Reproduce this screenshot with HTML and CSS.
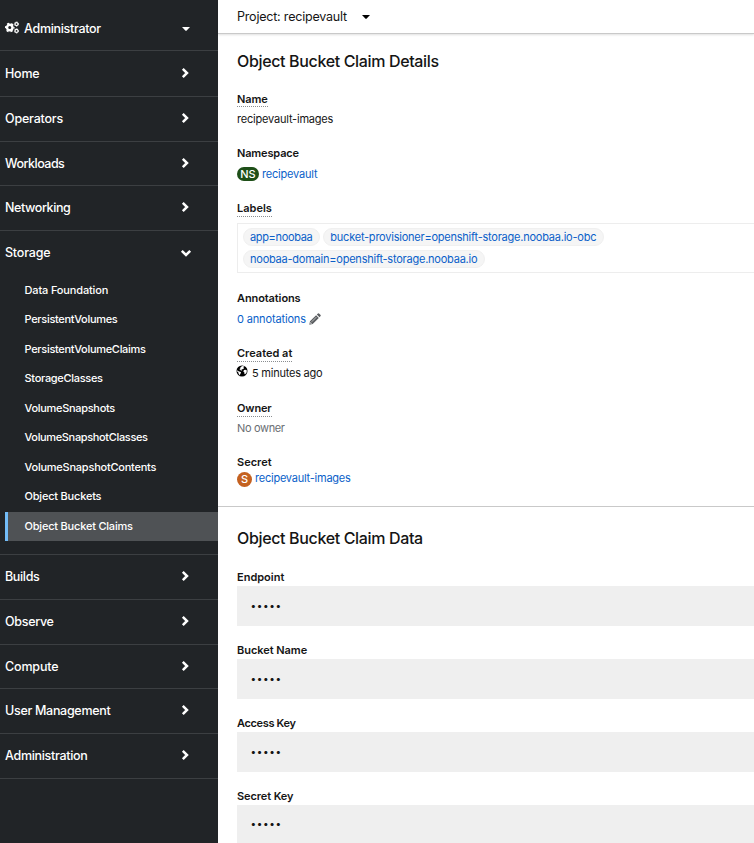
FILE: index.html
```html
<!DOCTYPE html>
<html lang="en">
<head>
<meta charset="utf-8">
<title>Object Bucket Claim Details</title>
<link rel="stylesheet" href="styles.css">
</head>
<body>
<svg width="0" height="0" class="defs">
  <symbol id="right" viewBox="0 0 8 12"><path d="M1.8 1.8 6 6 1.8 10.2" fill="none" stroke="currentColor" stroke-width="2.5"/></symbol>
  <symbol id="down" viewBox="0 0 12 8"><path d="M1.8 1.8 6 6 10.2 1.8" fill="none" stroke="currentColor" stroke-width="2.5"/></symbol>
  <symbol id="caret" viewBox="0 0 8 4"><path d="M0 0h8L4.5 3.8h-1z" fill="currentColor"/></symbol>
</svg>
<div class="page">
  <nav class="sidebar">
    <div class="perspective">
      <svg class="cogs" viewBox="0 0 13 12">
        <circle cx="4.4" cy="6" r="2.5" fill="none" stroke="currentColor" stroke-width="2.2"/>
        <circle cx="4.4" cy="6" r="3.8" fill="none" stroke="currentColor" stroke-width="1.4" stroke-dasharray="2 1.98" stroke-dashoffset="1"/>
        <circle cx="10.7" cy="2.8" r="1.4" fill="none" stroke="currentColor" stroke-width="1.1"/>
        <circle cx="10.7" cy="2.8" r="2" fill="none" stroke="currentColor" stroke-width=".8" stroke-dasharray="1.05 1.05"/>
        <circle cx="10.7" cy="9.2" r="1.4" fill="none" stroke="currentColor" stroke-width="1.1"/>
        <circle cx="10.7" cy="9.2" r="2" fill="none" stroke="currentColor" stroke-width=".8" stroke-dasharray="1.05 1.05"/>
      </svg>
      <span class="k3">Administrator</span>
      <svg class="caret"><use href="#caret"/></svg>
    </div>
    <div class="item first"><span class="k2">Home</span><svg class="right"><use href="#right"/></svg></div>
    <div class="item"><span class="k2">Operators</span><svg class="right"><use href="#right"/></svg></div>
    <div class="item"><span class="k5">Workloads</span><svg class="right"><use href="#right"/></svg></div>
    <div class="item"><span class="k4">Networking</span><svg class="right"><use href="#right"/></svg></div>
    <div class="group">
      <div class="group-title"><span class="k2">Storage</span><svg class="down"><use href="#down"/></svg></div>
      <div class="sub k15">Data Foundation</div>
      <div class="sub k3">PersistentVolumes</div>
      <div class="sub k3">PersistentVolumeClaims</div>
      <div class="sub k3">StorageClasses</div>
      <div class="sub k3">VolumeSnapshots</div>
      <div class="sub k35">VolumeSnapshotClasses</div>
      <div class="sub k25">VolumeSnapshotContents</div>
      <div class="sub k2">Object Buckets</div>
      <div class="sub k2 current">Object Bucket Claims</div>
    </div>
    <div class="item"><span class="k35">Builds</span><svg class="right"><use href="#right"/></svg></div>
    <div class="item"><span class="k3">Observe</span><svg class="right"><use href="#right"/></svg></div>
    <div class="item"><span class="k15">Compute</span><svg class="right"><use href="#right"/></svg></div>
    <div class="item"><span class="k3">User Management</span><svg class="right"><use href="#right"/></svg></div>
    <div class="item"><span class="k3">Administration</span><svg class="right"><use href="#right"/></svg></div>
  </nav>
  <main class="main">
    <header class="project"><span class="k2">Project: recipevault</span><svg class="caret"><use href="#caret"/></svg></header>
    <section class="details">
      <h2>Object Bucket Claim Details</h2>
      <dl>
        <div class="field name"><dt><span class="hint k1">Name</span></dt><dd class="k2">recipevault-images</dd></div>
        <div class="field namespace"><dt class="k15">Namespace</dt><dd><b class="badge ns">NS</b><a class="k2">recipevault</a></dd></div>
        <div class="field labels"><dt><span class="hint">Labels</span></dt>
          <dd class="tags"><a class="tag k35">app=noobaa</a><a class="tag k25">bucket-provisioner=openshift-storage.noobaa.io-obc</a><a class="tag k25">noobaa-domain=openshift-storage.noobaa.io</a></dd></div>
        <div class="field annotations"><dt class="k1">Annotations</dt><dd><a class="k15">0 annotations</a>
          <svg class="pencil" viewBox="0 0 12 12"><path d="M.3 11.7 1 8.3 7.1 2.2 9.8 4.9 3.7 11zM7.8 1.5 9 .4q.5-.4 1 0l1.6 1.6q.4.5 0 1L10.5 4.2z" fill="#5b5e61"/><path d="M2.7 8.8 7.4 4.1M1.6 9.2v1.2h1.2" fill="none" stroke="#fff" stroke-width=".6"/></svg></dd></div>
        <div class="field created"><dt><span class="hint">Created at</span></dt><dd>
          <svg class="globe" viewBox="0 0 12 12"><circle cx="6" cy="6" r="5.5"/><path d="M6.3.9 8.3 1.4 7.4 2.5 8.2 3.2 6.6 4.2 5.4 4.6 6.2 5.6 4.9 5.5 4.3 4.7 3.4 4.2 4.6 2.9 4.3 2.2z" fill="#fff"/><path d="M1.1 5.2 2.6 6.2 4.6 6.9 5.1 7.8 4.2 9 3.9 10.4 2.6 8.8 2.4 7.6 1.2 6.6zM8 5.1 9.6 4.7 10.9 5.6 10.6 7.4 9.2 9.3 8.4 8.9 8.4 7.4 7.3 6.5z" fill="#fff"/></svg><span class="k25">5 minutes ago</span></dd></div>
        <div class="field owner"><dt><span class="hint k15">Owner</span></dt><dd class="muted k35">No owner</dd></div>
        <div class="field secret"><dt>Secret</dt><dd><b class="badge s">S</b><a class="k25">recipevault-images</a></dd></div>
      </dl>
    </section>
    <section class="data">
      <h2>Object Bucket Claim Data</h2>
      <dl>
        <div class="secret-field"><dt>Endpoint</dt><dd>•••••</dd></div>
        <div class="secret-field"><dt class="k05">Bucket Name</dt><dd>•••••</dd></div>
        <div class="secret-field"><dt class="k35">Access Key</dt><dd>•••••</dd></div>
        <div class="secret-field"><dt class="k1">Secret Key</dt><dd class="last">•••••</dd></div>
      </dl>
    </section>
  </main>
</div>
</body>
</html>
```

FILE: styles.css
```css
* { box-sizing: border-box; }
body { margin: 0; font: 11px/16px Inter, "Liberation Sans", sans-serif; color: #151515; background: #fff; }
.defs { display: block; }
svg { flex: none; }
h2, dl, dd, dt { margin: 0; }
.page { display: flex; height: 843px; overflow: hidden; }

/* letter tracking steps */
.k05 { letter-spacing: -.05px; }
.k1 { letter-spacing: -.1px; }
.k15 { letter-spacing: -.15px; }
.k2 { letter-spacing: -.2px; }
.k25 { letter-spacing: -.23px; }
.k3 { letter-spacing: -.3px; }
.k35 { letter-spacing: -.35px; }
.k4 { letter-spacing: -.4px; }
.k5 { letter-spacing: -.5px; }

/* sidebar */
.sidebar { flex: none; width: 218px; background: #212427; color: #fff; font-weight: 500; }
.perspective, .item, .group-title { display: flex; align-items: center; padding-left: 5px; font-size: 12.5px; }
.perspective { height: 51px; padding-top: 7px; border-bottom: 1px solid #3c3f42; }
.cogs { width: 14px; height: 13px; margin: -2px 5px 0 0; }
.caret { width: 8px; height: 4px; }
.perspective .caret { margin: 0 28px 0 auto; }
.item { height: 44.75px; border-bottom: 1px solid #3c3f42; }
.item.first { height: 45.9px; padding-top: 1px; }
.right { width: 8px; height: 12px; margin: -2px 29px 0 auto; }
.down { width: 12px; height: 8px; margin: -1px 26.5px 0 auto; }
.group { height: 324.05px; border-bottom: 1px solid #3c3f42; }
.group-title { height: 44.4px; }
.sub { height: 29.55px; margin-left: 5px; padding-left: 19.5px; line-height: 29.2px; }
.current { height: 29.2px; padding-left: 16.5px; border-left: 3px solid #73bcf7; background: #4f5255; }

/* main */
.main { flex: 1; min-width: 0; }
.project { display: flex; align-items: center; height: 34px; padding-left: 19px; border-bottom: 1px solid #c9c9c9; box-shadow: 0 1px 2px rgba(0,0,0,.12); font-size: 12.5px; }
.project .caret { margin-left: 15px; color: #000; }
h2 { font-size: 16px; line-height: 20px; font-weight: 500; letter-spacing: -.35px; }
.details { height: 473px; padding: 17px 0 0 19px; border-bottom: 1px solid #c9c9c9; }
.details dl { margin-top: 20px; }
dt { height: 16px; font-weight: 600; }
.hint { display: inline-block; height: 17px; border-bottom: 1px dotted #8a8d90; }
.name .hint { height: 16px; }
.field dd { display: flex; align-items: center; height: 16px; }
.name { height: 54px; }
.name dd { margin-top: 4px; }
.namespace { height: 55px; }
.namespace dd { margin-top: 5px; }
.labels { height: 90px; }
.labels .tags { display: flex; flex-wrap: wrap; align-content: flex-start; gap: 4px 3px; height: 50px; margin-top: 7px; padding: 4px 100px 0 5px; border: 1px solid #ededed; border-right: 0; }
.tag { height: 18px; padding: 0 6.5px 0 6px; line-height: 16px; border: 1px solid #f0f0f0; border-radius: 9px; background: #f5f5f5; }
.tag:first-child { padding-right: 7px; }
a { color: #0a5fc9; }
.annotations { height: 55px; }
.annotations dd { margin-top: 5px; }
.pencil { width: 12px; height: 12px; margin: -1px 0 0 3px; }
.created { height: 55px; }
.created dd { margin-top: 4px; }
.globe { width: 12px; height: 12px; margin: -4px 4px 0 -1px; }
.owner { height: 54px; }
.owner dd { margin-top: 4px; }
.muted { color: #6a6e73; }
.badge { flex: none; font-weight: 500; color: #fff; text-align: center; }
.ns { width: 22px; height: 14px; margin-right: 3px; line-height: 14px; border-radius: 7px; background: #1e4f18; }
.s { width: 15px; height: 15px; margin: 2px 3px 0 0; line-height: 14px; border-radius: 50%; background: #c46120; }
.data { padding: 21px 0 0 19px; }
.data dl { margin-top: 21px; }
.secret-field { height: 73px; }
.secret-field dt { height: 17px; }
.secret-field dd { height: 40px; padding-left: 13.5px; line-height: 39px; font-size: 10px; letter-spacing: .6px; background: #efefef; }
.secret-field .last { line-height: 37px; }
```
